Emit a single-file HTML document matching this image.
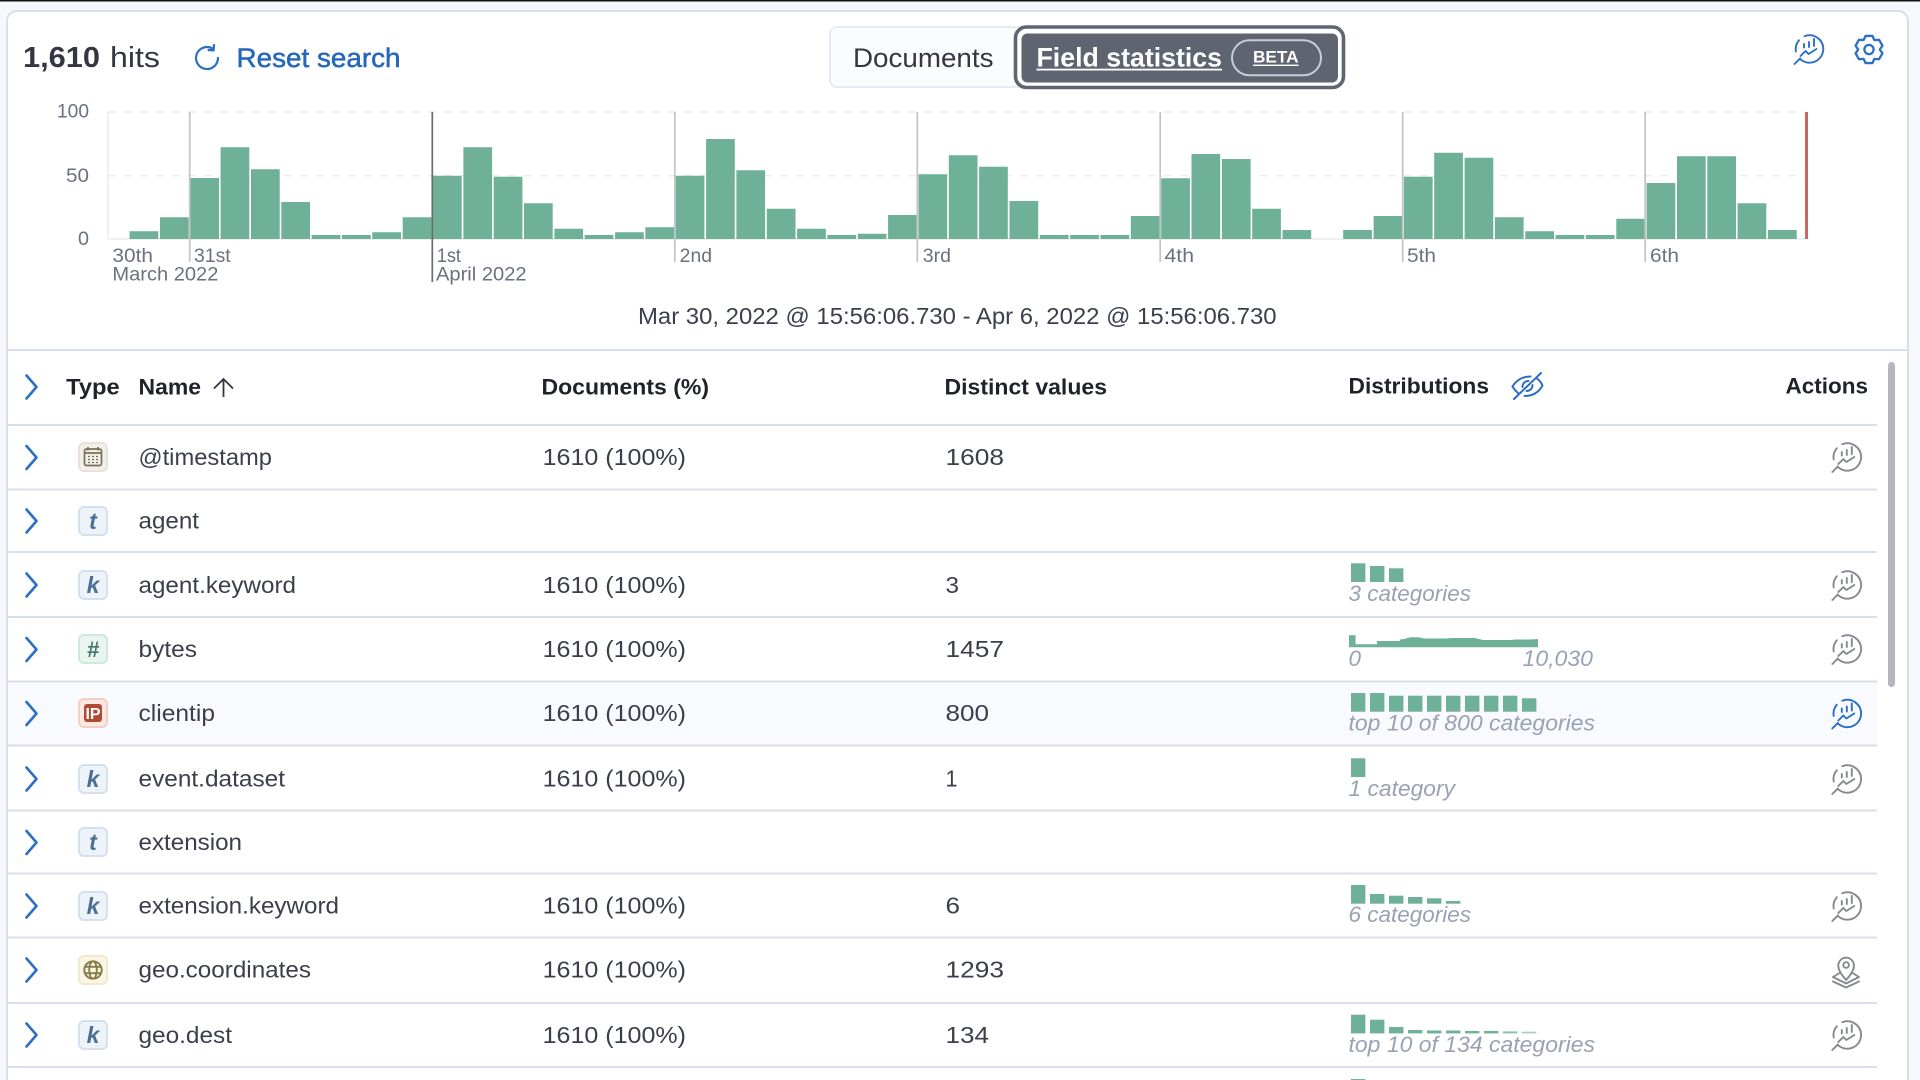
<!DOCTYPE html>
<html lang="en">
<head>
<meta charset="utf-8">
<title>Field statistics</title>
<style>
html,body{margin:0;padding:0;width:1920px;height:1080px;overflow:hidden;background:#f6f8fc}
svg{display:block}
text{font-family:"Liberation Sans",sans-serif;white-space:pre}
.n{font-size:23px;fill:#3a3f4b}
.h{font-size:22px;font-weight:700;fill:#1f2229}
.d{font-size:23px;fill:#3a3f4b}
.l{font-size:19px;fill:#6a717d}
.c{font-size:22px;font-style:italic;fill:#98a2b3}
.g{fill:#6eb098}
.tk{font-size:23px;font-weight:700;font-style:italic;fill:#4b6f98;text-anchor:middle}
.chev{fill:none;stroke:#2a6fc4;stroke-width:2.6;stroke-linecap:round;stroke-linejoin:round}
.ln{stroke:#d8deea;stroke-width:2}
</style>
</head>
<body>
<svg width="1920" height="1080" viewBox="0 0 1920 1080" xmlns="http://www.w3.org/2000/svg">
<defs>
<g id="lens" fill="none" stroke="currentColor" stroke-width="1.9" stroke-linecap="round" stroke-linejoin="round">
<path d="M-5,-12.8A13.8,13.8 0 0 1 13.8,0A13.8,13.8 0 0 1 -9.2,10.2"/>
<path d="M-13.6,2.5A13.8,13.8 0 0 1 -10.5,-8.8"/>
<path d="M-9.4,9.4L-15,15"/>
<path d="M-5.5,-5V-1.5M-0.5,-7V-2M4.5,-10V-3"/>
<path d="M-9,7L-4,2L-1,5L7,0"/>
</g>
<path id="chev" class="chev" d="M0,-11.5L10,0L0,11.5"/>
</defs>

<rect width="1920" height="1080" fill="#f6f8fc"/>
<rect x="0" y="0" width="1920" height="1.5" fill="#111"/>
<rect x="7" y="11" width="1901" height="1100" rx="10" fill="#fff" stroke="#d9dfeb" stroke-width="2"/>

<!-- top bar -->
<text x="23" y="67" font-size="29" font-weight="700" fill="#343741" textLength="77" lengthAdjust="spacingAndGlyphs">1,610</text>
<text x="110" y="67" font-size="29" fill="#343741" textLength="50" lengthAdjust="spacingAndGlyphs">hits</text>
<g fill="none" stroke="#2a6fc4" stroke-width="2.2" stroke-linecap="round" stroke-linejoin="round">
<path d="M213,48.8A11,11 0 1 0 218,58"/>
<path d="M214,45L213.6,50.4L208.5,50"/>
</g>
<text x="236.5" y="67" font-size="27" fill="#2567bb" stroke="#2567bb" stroke-width=".5" textLength="164" lengthAdjust="spacingAndGlyphs">Reset search</text>

<rect x="830" y="27" width="220" height="60" rx="7" fill="#fbfcfe" stroke="#e6eaf2" stroke-width="2"/>
<text x="853" y="67" font-size="27" fill="#343741" textLength="140.5" lengthAdjust="spacingAndGlyphs">Documents</text>
<rect x="1015.5" y="27" width="328" height="60.5" rx="11" fill="#fff" stroke="#5f6570" stroke-width="3.6"/>
<rect x="1021.5" y="33.5" width="316.5" height="49" rx="6" fill="#5f6570"/>
<text x="1036.5" y="66.7" font-size="27" font-weight="700" fill="#fff" textLength="185.5" lengthAdjust="spacingAndGlyphs">Field statistics</text>
<rect x="1036.5" y="68.7" width="185.5" height="1.8" fill="#fff"/>
<rect x="1232" y="40.3" width="89" height="35" rx="17.5" fill="none" stroke="#c9ced6" stroke-width="2"/>
<text x="1253" y="62.7" font-size="17" font-weight="700" fill="#fff" textLength="45.6" lengthAdjust="spacingAndGlyphs">BETA</text>
<rect x="1253" y="64.6" width="45.6" height="1.4" fill="#fff"/>

<use href="#lens" transform="translate(1809.5,49)" style="color:#2a6fc4"/>
<g transform="translate(1869,49.5)" fill="none" stroke="#2a6fc4" stroke-width="2.3" stroke-linejoin="round">
<path d="M-3.39,-13.58L3.39,-13.58L5.4,-9.35L10.07,-9.73L13.46,-3.86L10.8,0L13.46,3.86L10.07,9.73L5.4,9.35L3.39,13.58L-3.39,13.58L-5.4,9.35L-10.07,9.73L-13.46,3.86L-10.8,0L-13.46,-3.86L-10.07,-9.73L-5.4,-9.35Z"/>
<circle r="4.6"/>
</g>

<!-- chart -->
<g stroke="#eaecef" stroke-width="1.6" fill="none">
<path d="M108,112H1805" stroke-dasharray="8 8"/>
<path d="M108,175.7H1805" stroke-dasharray="8 8"/>
<path d="M108,112V239"/>
<path d="M108,239H1805"/>
</g>
<path class="g" d="M129.6,231.3h28.7V239h-28.7ZM160,217.3h28.7V239h-28.7ZM190.3,178h28.7V239h-28.7ZM220.6,147.3h28.7V239h-28.7ZM251,169.3h28.7V239h-28.7ZM281.3,202h28.7V239h-28.7ZM311.7,235h28.7V239h-28.7ZM342,235h28.7V239h-28.7ZM372.3,232.3h28.7V239h-28.7ZM402.7,217.3h28.7V239h-28.7ZM433,175.7h28.7V239h-28.7ZM463.4,147.3h28.7V239h-28.7ZM493.7,176.7h28.7V239h-28.7ZM524,203.3h28.7V239h-28.7ZM554.4,228.7h28.7V239h-28.7ZM584.7,235h28.7V239h-28.7ZM615.1,232.3h28.7V239h-28.7ZM645.4,227.3h28.7V239h-28.7ZM675.7,175.7h28.7V239h-28.7ZM706.1,139h28.7V239h-28.7ZM736.4,170.3h28.7V239h-28.7ZM766.8,208.7h28.7V239h-28.7ZM797.1,228.7h28.7V239h-28.7ZM827.4,235h28.7V239h-28.7ZM857.8,233.7h28.7V239h-28.7ZM888.1,215h28.7V239h-28.7ZM918.5,174.3h28.7V239h-28.7ZM948.8,155.3h28.7V239h-28.7ZM979.1,166.7h28.7V239h-28.7ZM1009.5,201h28.7V239h-28.7ZM1039.8,235h28.7V239h-28.7ZM1070.2,235h28.7V239h-28.7ZM1100.5,235h28.7V239h-28.7ZM1130.8,216h28.7V239h-28.7ZM1161.2,178.3h28.7V239h-28.7ZM1191.5,154h28.7V239h-28.7ZM1221.9,159h28.7V239h-28.7ZM1252.2,208.7h28.7V239h-28.7ZM1282.5,230h28.7V239h-28.7ZM1343.2,230h28.7V239h-28.7ZM1373.6,216h28.7V239h-28.7ZM1403.9,176.7h28.7V239h-28.7ZM1434.2,152.7h28.7V239h-28.7ZM1464.6,157.7h28.7V239h-28.7ZM1494.9,217.3h28.7V239h-28.7ZM1525.3,231.3h28.7V239h-28.7ZM1555.6,235h28.7V239h-28.7ZM1585.9,235h28.7V239h-28.7ZM1616.3,218.7h28.7V239h-28.7ZM1646.6,183h28.7V239h-28.7ZM1677,156.3h28.7V239h-28.7ZM1707.3,156.3h28.7V239h-28.7ZM1737.6,203.3h28.7V239h-28.7ZM1768,230h28.7V239h-28.7Z"/>
<g stroke-width="1.7" fill="none">
<path stroke="#c2c4c8" d="M189.7,112V262M674.8,112V262M917.3,112V262M1160.2,112V262M1402.7,112V262M1645.2,112V262"/>
<path stroke="#6a6c70" d="M432.3,112V282"/>
</g>
<rect x="1805" y="112" width="3" height="127" fill="#c9685f"/>
<text class="l" x="57" y="117.5" textLength="32" lengthAdjust="spacingAndGlyphs">100</text>
<text class="l" x="66" y="182" textLength="23" lengthAdjust="spacingAndGlyphs">50</text>
<text class="l" x="78" y="245" textLength="11" lengthAdjust="spacingAndGlyphs">0</text>
<text class="l" x="112.4" y="262" textLength="40.6" lengthAdjust="spacingAndGlyphs">30th</text>
<text class="l" x="194" y="262" textLength="36.7" lengthAdjust="spacingAndGlyphs">31st</text>
<text class="l" x="112.4" y="280.5" textLength="106" lengthAdjust="spacingAndGlyphs">March 2022</text>
<text class="l" x="436.7" y="262" textLength="24.3" lengthAdjust="spacingAndGlyphs">1st</text>
<text class="l" x="436" y="280.5" textLength="90.6" lengthAdjust="spacingAndGlyphs">April 2022</text>
<text class="l" x="679.7" y="262" textLength="32.3" lengthAdjust="spacingAndGlyphs">2nd</text>
<text class="l" x="922.8" y="262" textLength="28.2" lengthAdjust="spacingAndGlyphs">3rd</text>
<text class="l" x="1164.5" y="262" textLength="29.5" lengthAdjust="spacingAndGlyphs">4th</text>
<text class="l" x="1407" y="262" textLength="29" lengthAdjust="spacingAndGlyphs">5th</text>
<text class="l" x="1650" y="262" textLength="29" lengthAdjust="spacingAndGlyphs">6th</text>
<text x="638" y="324" font-size="23" fill="#3a3f4b" textLength="638.6" lengthAdjust="spacingAndGlyphs">Mar 30, 2022 @ 15:56:06.730 - Apr 6, 2022 @ 15:56:06.730</text>

<line class="ln" x1="8" y1="350" x2="1907" y2="350"/>

<!-- hovered row -->
<rect x="8" y="682" width="1869" height="63" fill="#f9fafd"/>

<!-- row lines -->
<g class="ln">
<line x1="8" y1="425" x2="1877" y2="425"/>
<line x1="8" y1="489.5" x2="1877" y2="489.5"/>
<line x1="8" y1="552" x2="1877" y2="552"/>
<line x1="8" y1="617" x2="1877" y2="617"/>
<line x1="8" y1="681.5" x2="1877" y2="681.5"/>
<line x1="8" y1="745.5" x2="1877" y2="745.5"/>
<line x1="8" y1="810.5" x2="1877" y2="810.5"/>
<line x1="8" y1="873.5" x2="1877" y2="873.5"/>
<line x1="8" y1="937.5" x2="1877" y2="937.5"/>
<line x1="8" y1="1003" x2="1877" y2="1003"/>
<line x1="8" y1="1067" x2="1877" y2="1067"/>
</g>

<!-- scrollbar -->
<rect x="1888" y="362" width="7" height="325" rx="3.5" fill="#b2b7c0"/>

<!-- header -->
<use href="#chev" transform="translate(26.5,387)"/>
<text class="h" x="66.2" y="394.5" textLength="53.5" lengthAdjust="spacingAndGlyphs">Type</text>
<text class="h" x="138.5" y="394.5" textLength="62.5" lengthAdjust="spacingAndGlyphs">Name</text>
<path d="M223.5,397V379.5M214,388.5L223.5,379L233,388.5" fill="none" stroke="#343741" stroke-width="1.8"/>
<text class="h" x="541.5" y="394.5" textLength="167.5" lengthAdjust="spacingAndGlyphs">Documents (%)</text>
<text class="h" x="944.5" y="394.5" textLength="162.5" lengthAdjust="spacingAndGlyphs">Distinct values</text>
<text class="h" x="1348.5" y="393.5" textLength="140.5" lengthAdjust="spacingAndGlyphs">Distributions</text>
<text class="h" x="1785.5" y="393.5" textLength="82.5" lengthAdjust="spacingAndGlyphs">Actions</text>
<g transform="translate(1527.5,386)" fill="none" stroke="#2a6fc4" stroke-width="2" stroke-linecap="round" stroke-linejoin="round">
<path d="M-15,0.5C-11,-6 -5,-9.5 3,-9.5M9.5,-7.5C12,-5.5 14,-3 15,-0.5C11.5,6 6,10 -3,10M-9,7.5C-11.5,5.5 -13.5,3 -15,0.5"/>
<path d="M13.5,-13L-13.5,13"/>
<path d="M-5,1C-5,-3 -2,-5 1,-5M5,-1C5,3 2,5 -1,5"/>
</g>

<!-- chevrons -->
<use href="#chev" transform="translate(26.5,457.5)"/>
<use href="#chev" transform="translate(26.5,521)"/>
<use href="#chev" transform="translate(26.5,585)"/>
<use href="#chev" transform="translate(26.5,649.5)"/>
<use href="#chev" transform="translate(26.5,713.5)"/>
<use href="#chev" transform="translate(26.5,779)"/>
<use href="#chev" transform="translate(26.5,842.5)"/>
<use href="#chev" transform="translate(26.5,906)"/>
<use href="#chev" transform="translate(26.5,970)"/>
<use href="#chev" transform="translate(26.5,1035)"/>

<!-- type icons -->
<rect x="79" y="443" width="28" height="28" rx="5" fill="#f2efe9" stroke="#e8e2d8" stroke-width="2"/>
<g fill="none" stroke="#7a6f58" stroke-width="1.7">
<rect x="84.5" y="449" width="17" height="16.5" rx="2"/>
<path d="M84.5,453H101.5M88,447V450.5M98,447V450.5"/>
<path d="M88,456.5H98.5M88,459.5H98.5M88,462.5H98.5" stroke-dasharray="2 2" stroke-width="1.3"/>
</g>

<rect x="79" y="507" width="28" height="28" rx="5" fill="#eef3f9" stroke="#d3e0f0" stroke-width="2"/>
<text class="tk" x="93" y="529">t</text>
<rect x="79" y="571" width="28" height="28" rx="5" fill="#eef3f9" stroke="#d3e0f0" stroke-width="2"/>
<text class="tk" x="93" y="593">k</text>
<rect x="79" y="635" width="28" height="28" rx="5" fill="#eaf5f0" stroke="#cfe8dd" stroke-width="2"/>
<text class="tk" x="93" y="657" style="fill:#43796a;font-size:22px">#</text>
<rect x="79" y="699" width="28" height="28" rx="5" fill="#fae8e2" stroke="#f5cfc5" stroke-width="2"/>
<rect x="84" y="704" width="18" height="18" rx="3" fill="#b04a33"/>
<text x="93" y="719" font-size="16" font-weight="700" fill="#fff" text-anchor="middle">IP</text>
<rect x="79" y="765" width="28" height="28" rx="5" fill="#eef3f9" stroke="#d3e0f0" stroke-width="2"/>
<text class="tk" x="93" y="787">k</text>
<rect x="79" y="828" width="28" height="28" rx="5" fill="#eef3f9" stroke="#d3e0f0" stroke-width="2"/>
<text class="tk" x="93" y="850">t</text>
<rect x="79" y="892" width="28" height="28" rx="5" fill="#eef3f9" stroke="#d3e0f0" stroke-width="2"/>
<text class="tk" x="93" y="914">k</text>
<rect x="79" y="956" width="28" height="28" rx="5" fill="#fbf6e6" stroke="#f1e9cb" stroke-width="2"/>
<g fill="none" stroke="#857b45" stroke-width="1.9">
<circle cx="93" cy="970" r="8.7"/>
<ellipse cx="93" cy="970" rx="3.8" ry="8.7"/>
<path d="M85,966.8H101M85,973.2H101"/>
</g>
<rect x="79" y="1021" width="28" height="28" rx="5" fill="#eef3f9" stroke="#d3e0f0" stroke-width="2"/>
<text class="tk" x="93" y="1043">k</text>

<!-- names -->
<text class="n" x="138.5" y="465" textLength="133.5" lengthAdjust="spacingAndGlyphs">@timestamp</text>
<text class="n" x="138.5" y="528.5" textLength="60.5" lengthAdjust="spacingAndGlyphs">agent</text>
<text class="n" x="138.5" y="593" textLength="157.5" lengthAdjust="spacingAndGlyphs">agent.keyword</text>
<text class="n" x="138.5" y="657" textLength="58.5" lengthAdjust="spacingAndGlyphs">bytes</text>
<text class="n" x="138.5" y="721" textLength="76.5" lengthAdjust="spacingAndGlyphs">clientip</text>
<text class="n" x="138.5" y="786.5" textLength="146.5" lengthAdjust="spacingAndGlyphs">event.dataset</text>
<text class="n" x="138.5" y="850" textLength="103.5" lengthAdjust="spacingAndGlyphs">extension</text>
<text class="n" x="138.5" y="913.5" textLength="200.5" lengthAdjust="spacingAndGlyphs">extension.keyword</text>
<text class="n" x="138.5" y="977.5" textLength="172.5" lengthAdjust="spacingAndGlyphs">geo.coordinates</text>
<text class="n" x="138.5" y="1043" textLength="93.5" lengthAdjust="spacingAndGlyphs">geo.dest</text>

<!-- documents -->
<text class="d" x="542.6" y="465" textLength="143.4" lengthAdjust="spacingAndGlyphs">1610 (100%)</text>
<text class="d" x="542.6" y="593" textLength="143.4" lengthAdjust="spacingAndGlyphs">1610 (100%)</text>
<text class="d" x="542.6" y="657" textLength="143.4" lengthAdjust="spacingAndGlyphs">1610 (100%)</text>
<text class="d" x="542.6" y="721" textLength="143.4" lengthAdjust="spacingAndGlyphs">1610 (100%)</text>
<text class="d" x="542.6" y="786.5" textLength="143.4" lengthAdjust="spacingAndGlyphs">1610 (100%)</text>
<text class="d" x="542.6" y="913.5" textLength="143.4" lengthAdjust="spacingAndGlyphs">1610 (100%)</text>
<text class="d" x="542.6" y="977.5" textLength="143.4" lengthAdjust="spacingAndGlyphs">1610 (100%)</text>
<text class="d" x="542.6" y="1043" textLength="143.4" lengthAdjust="spacingAndGlyphs">1610 (100%)</text>

<!-- distinct -->
<text class="d" x="945.5" y="465" textLength="58.5" lengthAdjust="spacingAndGlyphs">1608</text>
<text class="d" x="945.5" y="593" textLength="13.5" lengthAdjust="spacingAndGlyphs">3</text>
<text class="d" x="945.5" y="657" textLength="58.5" lengthAdjust="spacingAndGlyphs">1457</text>
<text class="d" x="945.5" y="721" textLength="43.5" lengthAdjust="spacingAndGlyphs">800</text>
<text class="d" x="945.5" y="786.5" textLength="12" lengthAdjust="spacingAndGlyphs">1</text>
<text class="d" x="945.5" y="913.5" textLength="14.5" lengthAdjust="spacingAndGlyphs">6</text>
<text class="d" x="945.5" y="977.5" textLength="58.5" lengthAdjust="spacingAndGlyphs">1293</text>
<text class="d" x="945.5" y="1043" textLength="43.5" lengthAdjust="spacingAndGlyphs">134</text>

<!-- distributions -->
<g class="g">
<rect x="1351" y="563.3" width="14.4" height="18.7"/><rect x="1370" y="566" width="14.4" height="16"/><rect x="1389" y="568.3" width="14.4" height="13.7"/>
<path d="M1349,647.3V635.3H1355.6V644.3H1377V641H1400V639.5L1404,639L1410,637.3H1419L1424,638.5H1446L1452,638H1475L1483,640H1511L1515,639.5H1530L1538,639V647.3Z"/>
<rect x="1351" y="693" width="14.4" height="18.7"/><rect x="1370" y="693" width="14.4" height="18.7"/><rect x="1389" y="695.7" width="14.4" height="16"/><rect x="1408" y="695.7" width="14.4" height="16"/><rect x="1427" y="695.7" width="14.4" height="16"/><rect x="1446" y="695.7" width="14.4" height="16"/><rect x="1465" y="695.7" width="14.4" height="16"/><rect x="1484" y="695.7" width="14.4" height="16"/><rect x="1503" y="695.7" width="14.4" height="16"/><rect x="1522" y="698.3" width="14.4" height="13.4"/>
<rect x="1351" y="758.3" width="14.4" height="18.7"/>
<rect x="1351" y="885" width="14.4" height="18.7"/><rect x="1370" y="894" width="14.4" height="9.7"/><rect x="1389" y="895.7" width="14.4" height="8"/><rect x="1408" y="897" width="14.4" height="6.7"/><rect x="1427" y="898.3" width="14.4" height="5.4"/><rect x="1446" y="901" width="14.4" height="2.7"/>
<rect x="1351" y="1014.7" width="14.4" height="18.7"/><rect x="1370" y="1019.7" width="14.4" height="13.7"/><rect x="1389" y="1027" width="14.4" height="6.4"/><rect x="1408" y="1030" width="14.4" height="3.4"/><rect x="1427" y="1030.5" width="14.4" height="2.9"/><rect x="1446" y="1030.5" width="14.4" height="2.9"/><rect x="1465" y="1031" width="14.4" height="2.4"/><rect x="1484" y="1031" width="14.4" height="2.4"/><rect x="1503" y="1031.4" width="14.4" height="2" opacity=".8"/><rect x="1522" y="1031.7" width="14.4" height="1.7" opacity=".6"/>
<rect x="1351" y="1079" width="14.4" height="1"/>
</g>
<text class="c" x="1348.5" y="601" textLength="122.5" lengthAdjust="spacingAndGlyphs">3 categories</text>
<text class="c" x="1348.5" y="666" textLength="12.5" lengthAdjust="spacingAndGlyphs">0</text>
<text class="c" x="1522.5" y="666" textLength="70.5" lengthAdjust="spacingAndGlyphs">10,030</text>
<text class="c" x="1348.5" y="730.5" textLength="246.5" lengthAdjust="spacingAndGlyphs">top 10 of 800 categories</text>
<text class="c" x="1348.5" y="796" textLength="106.5" lengthAdjust="spacingAndGlyphs">1 category</text>
<text class="c" x="1348.5" y="922" textLength="122.5" lengthAdjust="spacingAndGlyphs">6 categories</text>
<text class="c" x="1348.5" y="1052" textLength="246.5" lengthAdjust="spacingAndGlyphs">top 10 of 134 categories</text>

<!-- actions -->
<use href="#lens" transform="translate(1847.3,457)" style="color:#85888e"/>
<use href="#lens" transform="translate(1847.3,585)" style="color:#85888e"/>
<use href="#lens" transform="translate(1847.3,649)" style="color:#85888e"/>
<use href="#lens" transform="translate(1847.3,713.5)" style="color:#2a6fc4"/>
<use href="#lens" transform="translate(1847.3,779)" style="color:#85888e"/>
<use href="#lens" transform="translate(1847.3,906)" style="color:#85888e"/>
<use href="#lens" transform="translate(1847.3,1035)" style="color:#85888e"/>
<g transform="translate(-0.5,0)" fill="none" stroke="#85888e" stroke-width="1.9" stroke-linejoin="round" stroke-linecap="round">
<path d="M1846.6,980C1842,975 1838.8,970.5 1838.8,965.5A7.8,7.8 0 0 1 1854.4,965.5C1854.4,970.5 1851,975 1846.6,980Z"/>
<circle cx="1846.6" cy="965" r="2.8"/>
<path d="M1840,973L1833.5,977L1846.6,983.5L1859.5,977L1853,973"/>
<path d="M1833.5,981.5L1846.6,987.5L1859.5,981.5"/>
</g>
</svg>
</body>
</html>
